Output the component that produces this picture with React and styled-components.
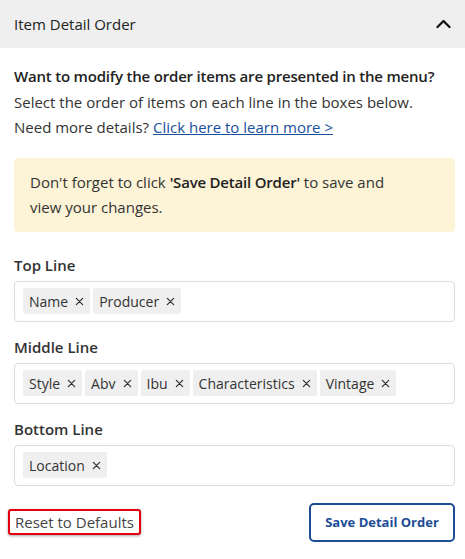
import React from "react";
import styled, { createGlobalStyle } from "styled-components";

const Global = createGlobalStyle`
  html, body { margin: 0; padding: 0; background: #fff; }
  body { font-family: "Open Sans", "Liberation Sans", sans-serif; color: #333; }
  * { box-sizing: border-box; }
`;

const Panel = styled.div`
  width: 465px;
  background: #fff;
`;

const Header = styled.div`
  height: 48px;
  background: #efefef;
  display: flex;
  align-items: center;
  justify-content: space-between;
  padding: 0 14px 0 14px;
`;

const Title = styled.h2`
  margin: 0;
  font-size: 15px;
  font-weight: 500;
  color: #222;
`;

const Body = styled.div`
  padding: 16px 10px 0 14px;
  display: flex;
  flex-direction: column;
`;

const Intro = styled.p`
  margin: 0;
  font-size: 15px;
  line-height: 25.5px;
  color: #333;
`;

const Strong = styled.strong`
  font-weight: 600;
  color: #222;
  letter-spacing: -0.2px;
`;

const Link = styled.a`
  color: #1a4f9c;
  text-decoration: underline;
`;

const Notice = styled.div`
  margin-top: 17px;
  background: #fdf3d6;
  border-radius: 4px;
  padding: 12px 16px 11px 16px;
  font-size: 15px;
  line-height: 25.5px;
  color: #333;
`;

const Label = styled.div`
  margin-top: ${(p) => p.$top}px;
  font-size: 15px;
  line-height: 20px;
  font-weight: 600;
  color: #333;
`;

const TagBox = styled.div`
  margin-top: 6px;
  height: 41px;
  border: 1px solid #dcdcdc;
  border-radius: 4px;
  padding: 6px 8px;
  display: flex;
  gap: 3px;
  align-items: center;
`;

const Tag = styled.span`
  height: 26px;
  background: #efefef;
  border-radius: 2px;
  padding: 0 6px;
  display: inline-flex;
  align-items: center;
  gap: 7px;
  font-size: 14px;
  color: #333;
`;

const Footer = styled.div`
  margin-top: 17px;
  display: flex;
  align-items: center;
  justify-content: space-between;
  padding: 0 10px 0 8px;
`;

const ResetButton = styled.button`
  height: 26px;
  padding: 0 5px;
  background: #fff;
  border: 2px solid #e3000f;
  border-radius: 3px;
  box-shadow: 0 1px 3px rgba(0, 0, 0, 0.35);
  font-family: inherit;
  font-size: 15px;
  color: #444;
  display: flex;
  align-items: center;
`;

const SaveButton = styled.button`
  width: 146px;
  height: 39px;
  background: #fff;
  border: 2px solid #1d4c95;
  border-radius: 5px;
  font-family: inherit;
  font-size: 13px;
  font-weight: 700;
  color: #1d4c95;
`;

const Close = () => (
  <svg width="9" height="9" viewBox="0 0 10 10" fill="none" stroke="#333" strokeWidth="1.4" strokeLinecap="round">
    <path d="M1.5 1.5 L8.5 8.5 M8.5 1.5 L1.5 8.5" />
  </svg>
);

const Chevron = () => (
  <svg width="15" height="10" viewBox="0 0 15 10" fill="none" stroke="#111" strokeWidth="2.2" strokeLinecap="round" strokeLinejoin="round">
    <path d="M1.5 8 L7.5 2 L13.5 8" />
  </svg>
);

const lines = [
  { label: "Top Line", top: 23, items: ["Name", "Producer"] },
  { label: "Middle Line", top: 15, items: ["Style", "Abv", "Ibu", "Characteristics", "Vintage"] },
  { label: "Bottom Line", top: 15, items: ["Location"] },
];

export default function App() {
  return (
    <Panel>
      <Global />
      <Header>
        <Title>Item Detail Order</Title>
        <Chevron />
      </Header>
      <Body>
        <Intro>
          <Strong>Want to modify the order items are presented in the menu?</Strong>
          <br />
          Select the order of items on each line in the boxes below.
          <br />
          Need more details? <Link href="#">Click here to learn more &gt;</Link>
        </Intro>
        <Notice>
          Don't forget to click <Strong>'Save Detail Order'</Strong> to save and
          <br />
          view your changes.
        </Notice>
        {lines.map((l) => (
          <React.Fragment key={l.label}>
            <Label $top={l.top}>{l.label}</Label>
            <TagBox>
              {l.items.map((it) => (
                <Tag key={it}>
                  {it}
                  <Close />
                </Tag>
              ))}
            </TagBox>
          </React.Fragment>
        ))}
      </Body>
      <Footer>
        <ResetButton>Reset to Defaults</ResetButton>
        <SaveButton>Save Detail Order</SaveButton>
      </Footer>
    </Panel>
  );
}
